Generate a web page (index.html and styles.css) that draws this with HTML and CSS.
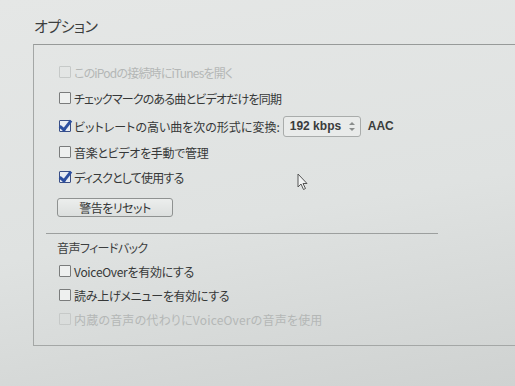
FILE: index.html
```html
<!DOCTYPE html>
<html lang="ja">
<head>
    <meta charset="UTF-8">
    <title>オプション</title>
    <link rel="stylesheet" href="styles.css">
</head>
<body>
    <h1 class="title">オプション</h1>

    <div class="group">
        <div class="row r1 disabled"><span class="check"></span>このiPodの接続時にiTunesを開く</div>
        <div class="row r2"><span class="check"></span>チェックマークのある曲とビデオだけを同期</div>
        <div class="row r3">
            <span class="check on"></span>ビットレートの高い曲を次の形式に変換:
            <span class="popup">192 kbps<span class="arrows"></span></span>
            <span class="codec">AAC</span>
        </div>
        <div class="row r4"><span class="check"></span>音楽とビデオを手動で管理</div>
        <div class="row r5"><span class="check on"></span>ディスクとして使用する</div>
        <div class="btn-row"><button class="btn">警告をリセット</button></div>

        <div class="separator"></div>

        <div class="section-label">音声フィードバック</div>
        <div class="row short"><span class="check"></span>VoiceOverを有効にする</div>
        <div class="row short"><span class="check"></span>読み上げメニューを有効にする</div>
        <div class="row short wide disabled"><span class="check"></span>内蔵の音声の代わりにVoiceOverの音声を使用</div>
    </div>

    <svg class="cursor" width="12" height="18" viewBox="0 0 12 18">
        <path d="M1 1 L1 14 L4 11 L6.5 16.5 L8.5 15.5 L6 10.5 L10 10.5 Z" fill="#f2f4f4" stroke="#555" stroke-width="1"/>
    </svg>
</body>
</html>
```

FILE: styles.css
```css
body {
    margin: 0;
    height: 386px;
    overflow: hidden;
    position: relative;
    font-family: "Noto Sans CJK JP", "Noto Sans", sans-serif;
    font-feature-settings: "palt";
    color: #363838;
    background: linear-gradient(170deg, #e5e7e6 0%, #dfe2e1 55%, #cfd2d1 100%);
}
.title {
    margin: 0;
    padding: 15px 0 0 34px;
    height: 29px;
    font-size: 15px;
    font-weight: normal;
    line-height: 22px;
    letter-spacing: -0.5px;
    color: #3c3e3e;
}
.group {
    margin-left: 33px;
    margin-right: -20px;
    height: 302px;
    box-sizing: border-box;
    border: 1px solid #a4a7a6;
    border-right: none;
    border-top-color: #979a99;
    padding-top: 15px;
}
.row {
    display: flex;
    align-items: center;
    height: 24px;
    padding-left: 25px;
    font-size: 12px;
    letter-spacing: -0.8px;
    white-space: nowrap;
}
.r2 { height: 28px; }
.r3 { height: 28px; letter-spacing: 0; }
.r4 { letter-spacing: -0.3px; }
.r5 { height: 26px; }
.row.short { letter-spacing: -0.3px; }
.row.wide { letter-spacing: 0.2px; }
.row.disabled {
    color: #b4b7b6;
}
.check {
    width: 10px;
    height: 10px;
    border: 1px solid #7a7c7c;
    border-radius: 1px;
    background: #eef0ef;
    margin-right: 3px;
    position: relative;
    flex: none;
}
.row.disabled .check {
    border-color: #c6c9c8;
    background: transparent;
}
.check.on {
    border-color: #3a4f86;
    background: #e8ecf3;
}
.check.on::after {
    content: "";
    position: absolute;
    left: 2px;
    top: -3px;
    width: 4px;
    height: 10px;
    border: solid #2c4fa0;
    border-width: 0 3px 3px 0;
    transform: rotate(38deg);
}
.popup {
    display: inline-flex;
    align-items: center;
    height: 19px;
    margin-left: 3px;
    padding: 0 5px 0 6px;
    width: 65px;
    border: 1px solid #a9acab;
    border-radius: 3px;
    background: #e9ebea;
    font-family: "Liberation Sans", sans-serif;
    font-size: 12px;
    font-weight: bold;
    letter-spacing: 0;
    color: #3a3c3c;
}
.arrows {
    margin-left: auto;
    width: 6px;
    height: 9px;
    position: relative;
}
.arrows::before,
.arrows::after {
    content: "";
    position: absolute;
    left: 0;
    border-left: 3px solid transparent;
    border-right: 3px solid transparent;
}
.arrows::before {
    top: 0;
    border-bottom: 3px solid #8a8d8c;
}
.arrows::after {
    bottom: 0;
    border-top: 3px solid #8a8d8c;
}
.codec {
    margin-left: 7px;
    font-family: "Liberation Sans", sans-serif;
    font-size: 12px;
    font-weight: bold;
    letter-spacing: 0;
    color: #3a3c3c;
}
.btn-row {
    padding: 4px 0 0 23px;
    height: 19px;
}
.btn {
    width: 116px;
    height: 19px;
    padding: 0;
    border: 1px solid #8f9291;
    border-radius: 3px;
    background: linear-gradient(#eceeed, #dcdfde);
    font-family: "Noto Sans CJK JP", sans-serif;
    font-feature-settings: "palt";
    font-size: 12px;
    line-height: 17px;
    letter-spacing: -0.5px;
    color: #343636;
}
.separator {
    margin: 20px 0 0 12px;
    width: 392px;
    height: 1px;
    background: #9c9f9e;
}
.section-label {
    padding: 3px 0 0 23px;
    height: 22px;
    font-size: 12px;
    line-height: 22px;
    letter-spacing: -0.6px;
    color: #3c3e3e;
}
.cursor {
    position: absolute;
    left: 297px;
    top: 173px;
}
```
